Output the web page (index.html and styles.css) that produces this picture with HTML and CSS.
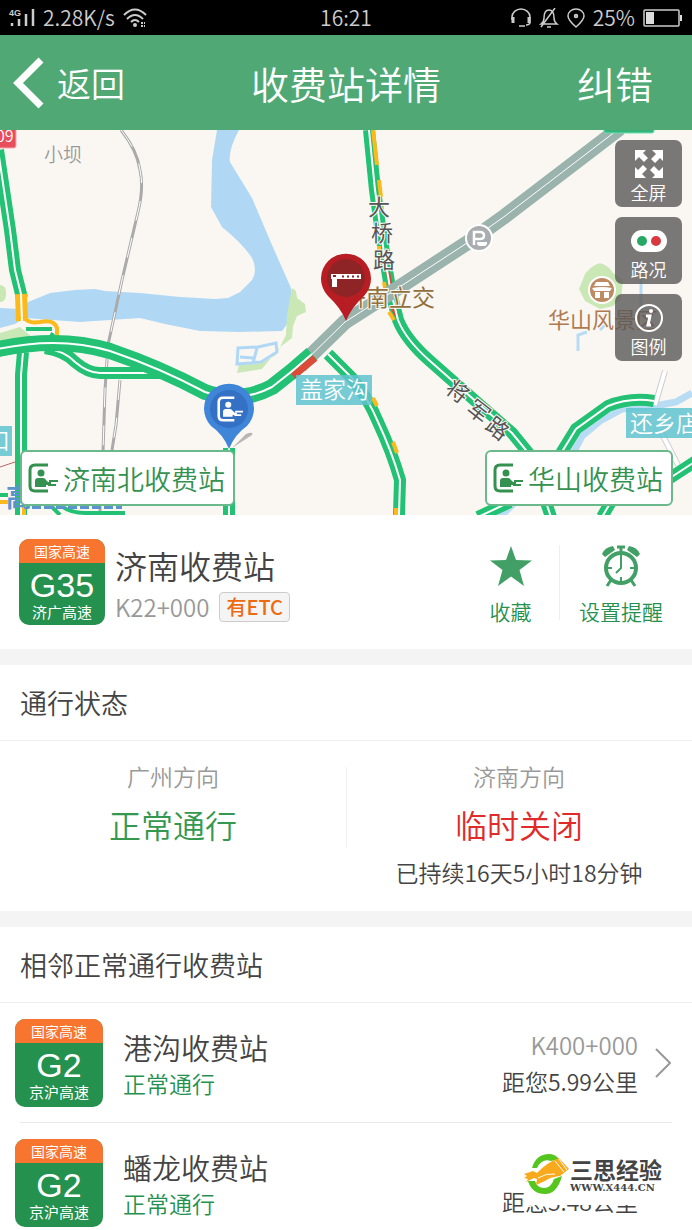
FILE: index.html
```html
<!doctype html>
<html lang="zh-CN">
<head>
    <meta charset="utf-8">
    <meta name="viewport" content="width=device-width, initial-scale=1">
    <title>收费站详情</title>
    <link rel="stylesheet" href="styles.css">
</head>

<body>
    <!-- shared icons -->
    <svg class="defs" width="0" height="0" aria-hidden="true">
        <symbol id="booth" viewBox="0 0 30 30">
            <path d="M20 2H7Q2 2 2 7v16q0 5 5 5h13" fill="none" stroke="currentColor" stroke-width="3"/>
            <circle cx="13" cy="10" r="3.5" fill="currentColor"/>
            <path d="M7 24v-6q0-3 3-3h5q2 0 3 2l2 2h3v3h-5v2z" fill="currentColor"/>
            <path d="M21 18h9M20 22h8" stroke="currentColor" stroke-width="2"/>
        </symbol>
        <symbol id="chevron" viewBox="0 0 16 30">
            <path d="M1 1l14 14L1 29" fill="none" stroke="currentColor" stroke-width="2"/>
        </symbol>
    </svg>

    <div class="statusbar">
        <div class="status-left">
            <svg width="26" height="20" viewBox="0 0 26 20">
                <text class="net" x="0" y="8">4G</text>
                <path d="M3 15v3M10 11v7M17 6v12M24 1v17" stroke="#ccc" stroke-width="2.5"/>
            </svg>
            <span>2.28K/s</span>
            <svg width="24" height="20" viewBox="0 0 24 20" fill="none" stroke="#ccc" stroke-width="2">
                <path d="M1 7q11-11 22 0M4 11q8-8 16 0M8 14q4-4 8 0"/>
                <circle cx="12" cy="17" r="1"/>
                <path d="M18 15h4M18 18h4" stroke-dasharray="2 1"/>
            </svg>
        </div>
        <span class="clock">16:21</span>
        <div class="status-right">
            <svg width="20" height="20" viewBox="0 0 20 20" fill="none" stroke="#ccc" stroke-width="1.5">
                <path d="M1 12V9a9 8 0 0 1 18 0v5q0 3-4 3M8 18h6"/>
                <path d="M2 9v6M18 9v6" stroke-width="3"/>
            </svg>
            <svg width="20" height="20" viewBox="0 0 20 20" fill="none" stroke="#ccc" stroke-width="1.5">
                <path d="M2 16q3-2 3-6 0-8 5-8t5 8q0 4 3 6zM8 19h4M16 0L2 19"/>
            </svg>
            <svg width="18" height="20" viewBox="0 0 18 20" fill="none" stroke="#ccc" stroke-width="1.5">
                <path d="M9 19Q1 12 1 8a8 7 0 0 1 16 0q0 4-8 11z"/>
                <circle cx="9" cy="8" r="1.5" fill="#888"/>
            </svg>
            <span>25%</span>
            <svg width="40" height="18" viewBox="0 0 40 18">
                <rect x="1" y="1" width="35" height="16" rx="1" fill="none" stroke="#ccc" stroke-width="1.5"/>
                <path d="M3 3h8v12H3zM37 6h2v6h-2z" fill="#ddd"/>
            </svg>
        </div>
    </div>

    <header class="navbar">
        <button class="back" type="button">
            <svg width="32" height="52" viewBox="0 0 32 52"><path d="M28 3L5 26l23 23" fill="none" stroke="#fff" stroke-width="7"/></svg>
            返回
        </button>
        <h1>收费站详情</h1>
        <button class="report" type="button">纠错</button>
    </header>

    <div class="map">
        <svg class="map-canvas" viewBox="0 0 692 385" preserveAspectRatio="xMidYMid slice">
            <!-- water and parks -->
            <path class="water" d="M0 178L20 179L28 172L50 163L75 160L95 159L105 161L140 163L180 167L215 169L228 168L240 162L252 150Q258 140 252 128Q243 114 222 97L211 77L212 30L217 0H239Q228 20 230 32L252 68L272 115L291 158L293 170L288 193L282 201L240 202L200 201L165 194L140 188L110 190L80 192L25 188L15 194L0 198z"/>
            <path class="park" d="M292 158l4 3 1 7 8 6 1 8-9 4-4 10-1 12-12 9-18 22-25 4 2-8 23-2 14-8 10-20 1-20z"/>
            <path class="park" d="M0 155q7 0 6 11-1 6-6 6zM0 203l20-6 12 10-12 8H0z"/>
            <path class="pond" d="M238 218l20-1 18-4 1 9-16 10-24 2zM257 218l-4 15M240 227l13 1"/>
            <path class="park" d="M600 133q8 2 13 10l10 7-2 18-8 8-13 3-15-8-6-12 6-15q7-9 15-11z"/>
            <path class="stream" d="M692 263L676 272L655 276L622 279L600 291L582 306L572 325M515 372L500 387"/>
            <path class="stream thin" d="M578 221V205l9-3M606 194l-6 6M641 147v35"/>

            <!-- railways -->
            <path class="rail" d="M121 0Q137 20 140 40Q144 58 138 82L122 150L108 215L105 260L103 322M120 250L116 295L112 320M100 370v16"/>
            <path class="rail-dash" d="M121 0Q137 20 140 40Q144 58 138 82L122 150L108 215L105 260L103 322M120 250L116 295L112 320"/>
            <path class="lane" d="M665 241L655 275M660 300L678 335"/>
            <path class="lane inner" d="M665 241L655 275M660 300L678 335"/>
            <path d="M0 226l20-4M0 337l18-6" stroke="#b66" fill="none"/>

            <!-- local roads, traffic colours -->
            <path class="road" d="M-2 20L4 60L10 100L15 140L22 168"/>
            <path class="road-mid" d="M-2 20L4 60L10 100L15 140L22 168"/>
            <path class="road slow" d="M21 164L22 191"/>
            <path class="road-mid" d="M21 164L22 191"/>
            <path class="side slow" d="M24 187q4 7 16 5 14-3 17 6v10"/>
            <path class="side" d="M26 199h26M24 209h26l3-6"/>
            <path class="road" d="M23 222L21 245V385"/>
            <path class="road-mid" d="M23 222L21 245V385"/>
            <path class="road" d="M45 218Q65 221 75 232Q88 243 100 243H160"/>
            <path class="road-mid" d="M45 218Q65 221 75 232Q88 243 100 243H160"/>
            <path class="side slow" d="M0 372h8M24 376v9"/>
            <path class="side" d="M0 365h8M50 375l10 10M60 375q10 8 25 8h40"/>
            <path class="road" d="M229 318V385"/>
            <path class="road-mid" d="M229 318V385"/>
            <path class="road" d="M328 224L352 248Q368 268 378 292Q392 322 400 350L399 385"/>
            <path class="road-mid" d="M328 224L352 248Q368 268 378 292Q392 322 400 350L399 385"/>
            <path class="side slow" d="M373 268l4 8M393 312l4 11M396 378v7"/>
            <path class="road" d="M369 0L375 60L382 110L390 158L398 190Q406 210 430 231L480 275L512 303L530 325L552 390"/>
            <path class="side slow" d="M373 0L377 35M379 50L381 67M384 152L387 170M389 182L394 190M379 116v6"/>
            <path class="side jam" d="M388 142L391 158M393 178L397 186"/>
            <path class="road-mid" d="M369 0L375 60L382 110L390 158L398 190Q406 210 430 231L480 275L512 303L530 325L552 390"/>
            <path class="road" d="M560 325L576 299L608 276Q630 267 654 271M478 387L510 372M602 387L612 370M670 348L696 331"/>
            <path class="road-mid" d="M560 325L576 299L608 276Q630 267 654 271M478 387L510 372M602 387L612 370M670 348L696 331"/>

            <!-- expressway -->
            <path class="grey-road" d="M300 236L345 192L395 160L470 111L505 86L620 -2"/>
            <path class="grey-mid" d="M300 236L345 192L395 160L470 111L505 86L620 -2"/>
            <path class="highway" d="M-2 219Q60 206 110 221Q160 238 205 262Q240 274 272 257Q292 242 312 224"/>
            <path class="jam-part" d="M293 246L315 228"/>
            <path class="road-mid" d="M-2 219Q60 206 110 221Q160 238 205 262Q240 274 272 257Q292 242 312 224"/>

            <!-- road shields -->
            <rect x="-20" y="-4" width="36" height="22" rx="2" fill="#e84d5c" stroke="#f7aab1" stroke-width="1"/>
            <text class="shield" x="-4" y="12">09</text>
            <rect x="604" y="-8" width="50" height="11" rx="2" fill="#35b37a" stroke="#6fe0b0"/>

            <!-- places -->
            <text class="place" x="44" y="32">小坝</text>
            <g class="road-name">
                <text x="368" y="85">大</text>
                <text x="371" y="111">桥</text>
                <text x="373" y="138">路</text>
                <text transform="translate(444 261) rotate(38)">将</text>
                <text transform="translate(465 281) rotate(38)">军</text>
                <text transform="translate(484 298) rotate(38)">路</text>
            </g>
            <text class="junction" x="343" y="176">济南立交</text>
            <text class="scenic" x="548" y="198">华山风景区</text>
            <text class="city" x="6" y="377">高</text>
            <path d="M32 377h90" stroke="#5b93cf" stroke-width="4" stroke-dasharray="9 3"/>

            <circle cx="479" cy="108" r="13" fill="#a9adb0" stroke="#fff" stroke-width="2"/>
            <path d="M474 115v-13h6q4 0 4 3.500t-4 3.500h-6" fill="none" stroke="#fff" stroke-width="2.500"/>
            <path d="M477 112h10v1q0 3-3 3h-4q-3 0-3-3z" fill="#fff"/>

            <circle cx="602" cy="160" r="13" fill="#bd8a62" stroke="#fff" stroke-width="2"/>
            <path d="M596 152h12l2 4h-16zM595 159h14v1h-14zM592 158q10-2 20 0l-2 3h-16zM595 162h5v6h-5zM604 162h5v6h-5z" fill="#fff"/>

            <!-- town labels -->
            <rect class="town-bg" x="296" y="245" width="76" height="30"/>
            <text class="town" x="300" y="268">盖家沟</text>
            <rect class="town-bg" x="626" y="278" width="80" height="30"/>
            <text class="town" x="630" y="302">还乡店</text>
            <rect class="town-bg" x="-10" y="296" width="22" height="30"/>
            <text class="town" x="-13" y="319">口</text>

            <!-- pins -->
            <path d="M232 318l14-14q8-3 6 1z" fill="#777" opacity=".5"/>
            <path d="M229 319Q223 304 211 296A25 25 0 1 1 247 296Q235 304 229 319z" fill="#3f86d8"/>
            <circle cx="229" cy="279" r="19" fill="#3470c4"/>
            <use href="#booth" x="216" y="266" width="28" height="26" color="#fff"/>
            <path d="M346 191Q341 178 328 166A25 25 0 1 1 364 166Q351 178 346 191z" fill="#b81d24"/>
            <circle cx="346" cy="148" r="19" fill="#8f2427"/>
            <path d="M331 144h30v5h-24v8h-5v-8h-1z" fill="#fff"/>
            <path d="M342 146.500h18" stroke="#8f2427" stroke-width="2" stroke-dasharray="2 3"/>
            <path d="M333 146h3" stroke="#8f2427" stroke-width="2"/>
        </svg>

        <div class="map-tools">
            <button type="button">
                <svg width="30" height="30" viewBox="0 0 30 30" fill="#fff">
                    <path id="arrow" d="M1 1h11L9 4l5 5-4 4-5-5-4 4z"/>
                    <use href="#arrow" transform="rotate(90 15 15)"/>
                    <use href="#arrow" transform="rotate(180 15 15)"/>
                    <use href="#arrow" transform="rotate(270 15 15)"/>
                </svg>
                全屏
            </button>
            <button type="button">
                <svg width="36" height="30" viewBox="0 0 36 30">
                    <rect x="0" y="4" width="36" height="22" rx="11" fill="#fff"/>
                    <circle cx="11" cy="15" r="5" fill="#28a866"/>
                    <circle cx="25" cy="15" r="5" fill="#d93a3f"/>
                </svg>
                路况
            </button>
            <button type="button">
                <svg width="30" height="30" viewBox="0 0 30 30">
                    <circle cx="15" cy="15" r="13" fill="none" stroke="#fff" stroke-width="2"/>
                    <circle cx="17" cy="8" r="2" fill="#fff"/>
                    <path d="M12 13h4l-2 9h3" fill="none" stroke="#fff" stroke-width="3"/>
                </svg>
                图例
            </button>
        </div>

        <div class="map-stations">
            <button type="button"><svg width="30" height="30"><use href="#booth"/></svg>济南北收费站</button>
            <button type="button"><svg width="30" height="30"><use href="#booth"/></svg>华山收费站</button>
        </div>
    </div>

    <section class="station">
        <div class="badge">
            <span class="badge-top">国家高速</span>
            <span class="badge-code">G35</span>
            <span class="badge-name">济广高速</span>
        </div>
        <div class="station-info">
            <h2>济南收费站</h2>
            <p>K22+000 <span class="etc">有ETC</span></p>
        </div>
        <div class="actions">
            <button class="favorite" type="button">
                <svg width="42" height="42" viewBox="0 0 42 42"><path d="M21 1l5 14 16 .500-12.500 9.500 4.500 16L21 31.500 8 41l4.500-16L0 15.500 16 15z" fill="#42a066"/></svg>
                收藏
            </button>
            <button class="remind" type="button">
                <svg width="42" height="42" viewBox="0 0 42 42" fill="none" stroke="#42a066">
                    <circle cx="21" cy="23" r="15" stroke-width="4"/>
                    <path d="M17 2h8M21 2v6" stroke-width="3"/>
                    <path d="M2 9q3-7 11-8l2 4L5 12zM40 9q-3-7-11-8l-2 4 10 7z" fill="#42a066" stroke="none"/>
                    <path d="M11 35l-4 6M31 35l4 6" stroke-width="3"/>
                    <path d="M21 10v13l-5 5M21 32v4M8 23h4M30 23h4" stroke-width="2"/>
                </svg>
                设置提醒
            </button>
        </div>
    </section>

    <section class="block">
        <h3>通行状态</h3>
        <div class="directions">
            <div class="direction">
                <p class="dir-name">广州方向</p>
                <p class="dir-state">正常通行</p>
            </div>
            <div class="direction">
                <p class="dir-name">济南方向</p>
                <p class="dir-state closed">临时关闭</p>
                <p class="dir-note">已持续16天5小时18分钟</p>
            </div>
        </div>
    </section>

    <section class="block nearby">
        <h3>相邻正常通行收费站</h3>
        <ul>
            <li>
                <a href="#ganggou">
                    <div class="badge">
                        <span class="badge-top">国家高速</span>
                        <span class="badge-code">G2</span>
                        <span class="badge-name">京沪高速</span>
                    </div>
                    <div class="near-info">
                        <span class="near-name">港沟收费站</span>
                        <span class="near-state">正常通行</span>
                    </div>
                    <div class="near-dist">
                        <span class="near-km">K400+000</span>
                        <span>距您5.99公里</span>
                    </div>
                    <svg class="go" width="16" height="30"><use href="#chevron"/></svg>
                </a>
            </li>
            <li>
                <a href="#panlong">
                    <div class="badge">
                        <span class="badge-top">国家高速</span>
                        <span class="badge-code">G2</span>
                        <span class="badge-name">京沪高速</span>
                    </div>
                    <div class="near-info">
                        <span class="near-name">蟠龙收费站</span>
                        <span class="near-state">正常通行</span>
                    </div>
                    <div class="near-dist">
                        <span class="near-km"></span>
                        <span>距您5.48公里</span>
                    </div>
                    <svg class="go" width="16" height="30"><use href="#chevron"/></svg>
                </a>
            </li>
        </ul>
        <div class="watermark">
            <svg width="46" height="42" viewBox="0 0 46 42">
                <path d="M8 15Q12 1 25 1q6 0 10 5l-8 2q-9-3-14 7z" fill="#55c51f"/>
                <path d="M4 28q4 13 17 13 12 0 17-18l-8 3q-3 9-10 9-7 0-9-7z" fill="#55c51f"/>
                <path d="M0 21l9-3 4 2q9-10 22-15l10 11-9 7q-10 1-15 5l-9 4 1-6-3-1-8 4 2-3-4-1 3-2z" fill="#f8a91c"/>
                <path d="M31 8l9 11M35 6l8 11M14 25q8-5 17-4" fill="none" stroke="#fff"/>
            </svg>
            <div>
                <div class="wm-name">三思经验</div>
                <div class="wm-url">WWW.X444.CN</div>
            </div>
        </div>
    </section>
</body>

</html>
```
FILE: styles.css
```css
* {
    box-sizing: border-box;
}

body, h1, h2, h3, p, ul {
    margin: 0;
    padding: 0;
    font-weight: 350;
}

body {
    background: #fff;
    color: #444;
    font-family: "Noto Sans CJK SC", "Noto Sans", sans-serif;
    font-size: 23px;
}

button {
    margin: 0;
    padding: 0;
    border: 0;
    background: none;
    color: inherit;
    font: inherit;
    cursor: pointer;
}

svg {
    display: block;
    flex: none;
}

.defs {
    position: absolute;
}

/* phone status bar */
.statusbar {
    display: grid;
    grid-template-columns: 1fr auto 1fr;
    align-items: center;
    height: 35px;
    padding: 0 9px;
    background: #000;
    color: #ccc;
    font-size: 21px;
    line-height: 35px;
}

.status-left, .status-right {
    display: flex;
    align-items: center;
    gap: 8px;
}

.status-right {
    justify-content: flex-end;
}

.net {
    font: bold 9px "Liberation Sans", sans-serif;
    fill: #ccc;
}

/* title bar */
.navbar {
    display: grid;
    grid-template-columns: 1fr auto 1fr;
    align-items: center;
    height: 95px;
    background: #50a975;
    color: #fff;
}

.navbar h1, .report {
    font-size: 38px;
}

.back {
    display: flex;
    align-items: center;
    justify-self: start;
    gap: 12px;
    padding-left: 13px;
    font-size: 34px;
}

.report {
    justify-self: end;
    padding-right: 39px;
}

/* map */
.map {
    position: relative;
    height: 385px;
    overflow: hidden;
    background: #faf7f3;
}

.map-canvas {
    width: 100%;
    height: 100%;
}

.water {
    fill: #b0d8f5;
}

.park {
    fill: #c9e8b5;
}

.pond, .stream, .rail, .rail-dash, .lane, .road, .road-mid, .side,
.grey-road, .grey-mid, .highway, .jam-part {
    fill: none;
}

.pond {
    stroke: #b0d8f5;
    stroke-width: 3;
}

.stream {
    stroke: #b9dcf5;
    stroke-width: 7;
}

.stream.thin {
    stroke-width: 3;
}

.rail {
    stroke: #aaa;
    stroke-width: 3;
}

.rail-dash {
    stroke: #fff;
    stroke-width: 1;
    stroke-dasharray: 20 18;
}

.lane {
    stroke: #ccc;
    stroke-width: 6;
}

.lane.inner {
    stroke: #fff;
    stroke-width: 4;
}

.road {
    stroke: #22c174;
    stroke-width: 12;
}

.side {
    stroke: #22c174;
    stroke-width: 4;
}

.slow {
    stroke: #fbb91b;
}

.jam {
    stroke: #dc4a38;
}

.road-mid {
    stroke: #fff;
    stroke-width: 2;
}

.highway {
    stroke: #22c174;
    stroke-width: 16;
}

.jam-part {
    stroke: #dc4a38;
    stroke-width: 7;
}

.grey-road {
    stroke: #9bb3ad;
    stroke-width: 15;
}

.grey-mid {
    stroke: #fff;
    stroke-width: 1;
}

.shield {
    fill: #fff;
    font-size: 16px;
}

.place {
    fill: #999;
    font-size: 19px;
}

.road-name {
    fill: #555;
    stroke: #faf7f3;
    stroke-width: 2;
    paint-order: stroke;
    font-size: 22px;
    font-weight: 400;
}

.junction, .scenic {
    fill: #92703c;
    stroke: #faf7f3;
    stroke-width: 2;
    paint-order: stroke;
    font-size: 23px;
    font-weight: 400;
}

.scenic {
    fill: #b07a50;
    font-size: 22px;
}

.city {
    fill: #5b93cf;
    font-size: 26px;
    font-weight: 700;
}

.town-bg {
    fill: #5fc3cf;
    opacity: .85;
}

.town {
    fill: #fff;
    font-size: 23px;
}

.map-tools {
    position: absolute;
    top: 10px;
    right: 10px;
    display: flex;
    flex-direction: column;
    gap: 10px;
}

.map-tools button {
    display: flex;
    flex-direction: column;
    align-items: center;
    width: 67px;
    height: 67px;
    padding-top: 9px;
    border-radius: 7px;
    background: rgba(90, 88, 86, .8);
    color: #fff;
    font-size: 18px;
    line-height: 26px;
}

.map-stations {
    position: absolute;
    right: 19px;
    bottom: 9px;
    left: 20px;
    display: flex;
    justify-content: space-between;
}

.map-stations button {
    display: flex;
    align-items: center;
    gap: 5px;
    height: 56px;
    padding: 0 8px 0 6px;
    border: 2px solid #6bb88a;
    border-radius: 6px;
    background: #fff;
    color: #35914f;
    font-size: 27px;
}

/* road number badge */
.badge {
    display: flex;
    flex: none;
    flex-direction: column;
    width: 88px;
    height: 88px;
    overflow: hidden;
    border-radius: 10px;
    background: #25914f;
    color: #fff;
    text-align: center;
}

.badge-top {
    background: #f87530;
    font-size: 14px;
    font-weight: 400;
    line-height: 24px;
}

.badge-code {
    font-family: "Liberation Sans", Arial, sans-serif;
    font-size: 34px;
    font-weight: 400;
    line-height: 44px;
}

.badge-name {
    font-size: 15px;
    font-weight: 400;
    line-height: 10px;
}

/* current station */
.station {
    display: flex;
    align-items: flex-start;
    padding: 24px 10px 24px 19px;
}

.station .badge {
    width: 86px;
    height: 86px;
}

.station-info {
    flex: 1;
    padding-left: 10px;
}

.station-info h2 {
    font-size: 32px;
    line-height: 52px;
}

.station-info p {
    display: flex;
    align-items: center;
    gap: 10px;
    color: #999;
    font-size: 24px;
    line-height: 32px;
}

.etc {
    padding: 0 6px;
    border: 1px solid #ccc;
    border-radius: 4px;
    background: #f4f4f4;
    color: #ee6a10;
    font-size: 20px;
    font-weight: 500;
    line-height: 28px;
}

.actions {
    display: flex;
    padding-top: 6px;
}

.actions button {
    display: flex;
    flex-direction: column;
    align-items: center;
    gap: 10px;
    height: 75px;
    color: #25914f;
    font-size: 21px;
    line-height: 28px;
}

.favorite {
    width: 97px;
}

.actions .remind {
    width: 123px;
    border-left: 1px solid #eee;
}

/* titled blocks */
.block {
    border-top: 16px solid #f4f4f4;
}

.block h3 {
    padding: 0 20px;
    border-bottom: 1px solid #eee;
    font-size: 27px;
    line-height: 75px;
}

.directions {
    display: grid;
    grid-template-columns: 1fr 1fr;
    padding: 18px 0 22px;
    background: linear-gradient(#f0f0f0, #f0f0f0) 50% 26px / 1px 80px no-repeat;
    text-align: center;
}

.dir-name {
    color: #999;
    line-height: 34px;
}

.dir-state {
    margin: 7px 0;
    color: #35984f;
    font-size: 32px;
    line-height: 48px;
}

.closed {
    color: #e02b2b;
}

.dir-note {
    line-height: 34px;
}

/* nearby stations */
.nearby {
    position: relative;
}

.nearby ul {
    list-style: none;
}

.nearby a {
    display: flex;
    align-items: center;
    padding: 16px 21px 15px 15px;
    color: inherit;
    text-decoration: none;
}

.nearby li + li::before {
    content: "";
    display: block;
    margin: 0 20px;
    border-top: 1px solid #e8e8e8;
}

.nearby li:last-child a {
    padding-bottom: 4px;
}

.near-info, .near-dist {
    display: flex;
    flex-direction: column;
}

.near-info {
    flex: 1;
    padding-left: 20px;
}

.near-name {
    font-size: 29px;
    line-height: 40px;
}

.near-state {
    color: #25914f;
    line-height: 32px;
}

.near-dist {
    text-align: right;
    line-height: 36px;
}

.near-km {
    min-height: 36px;
    color: #999;
    font-size: 24px;
}

.go {
    margin-left: 17px;
    color: #999;
}

.watermark {
    position: absolute;
    right: 20px;
    bottom: 26px;
    display: flex;
    align-items: center;
    width: 148px;
    height: 62px;
    border-radius: 20px 0 0 0;
    background: #fff;
    color: #444;
}

.wm-name {
    font-size: 23px;
    font-weight: 700;
    line-height: 26px;
}

.wm-url {
    font: bold 10px "DejaVu Serif", serif;
}
```
